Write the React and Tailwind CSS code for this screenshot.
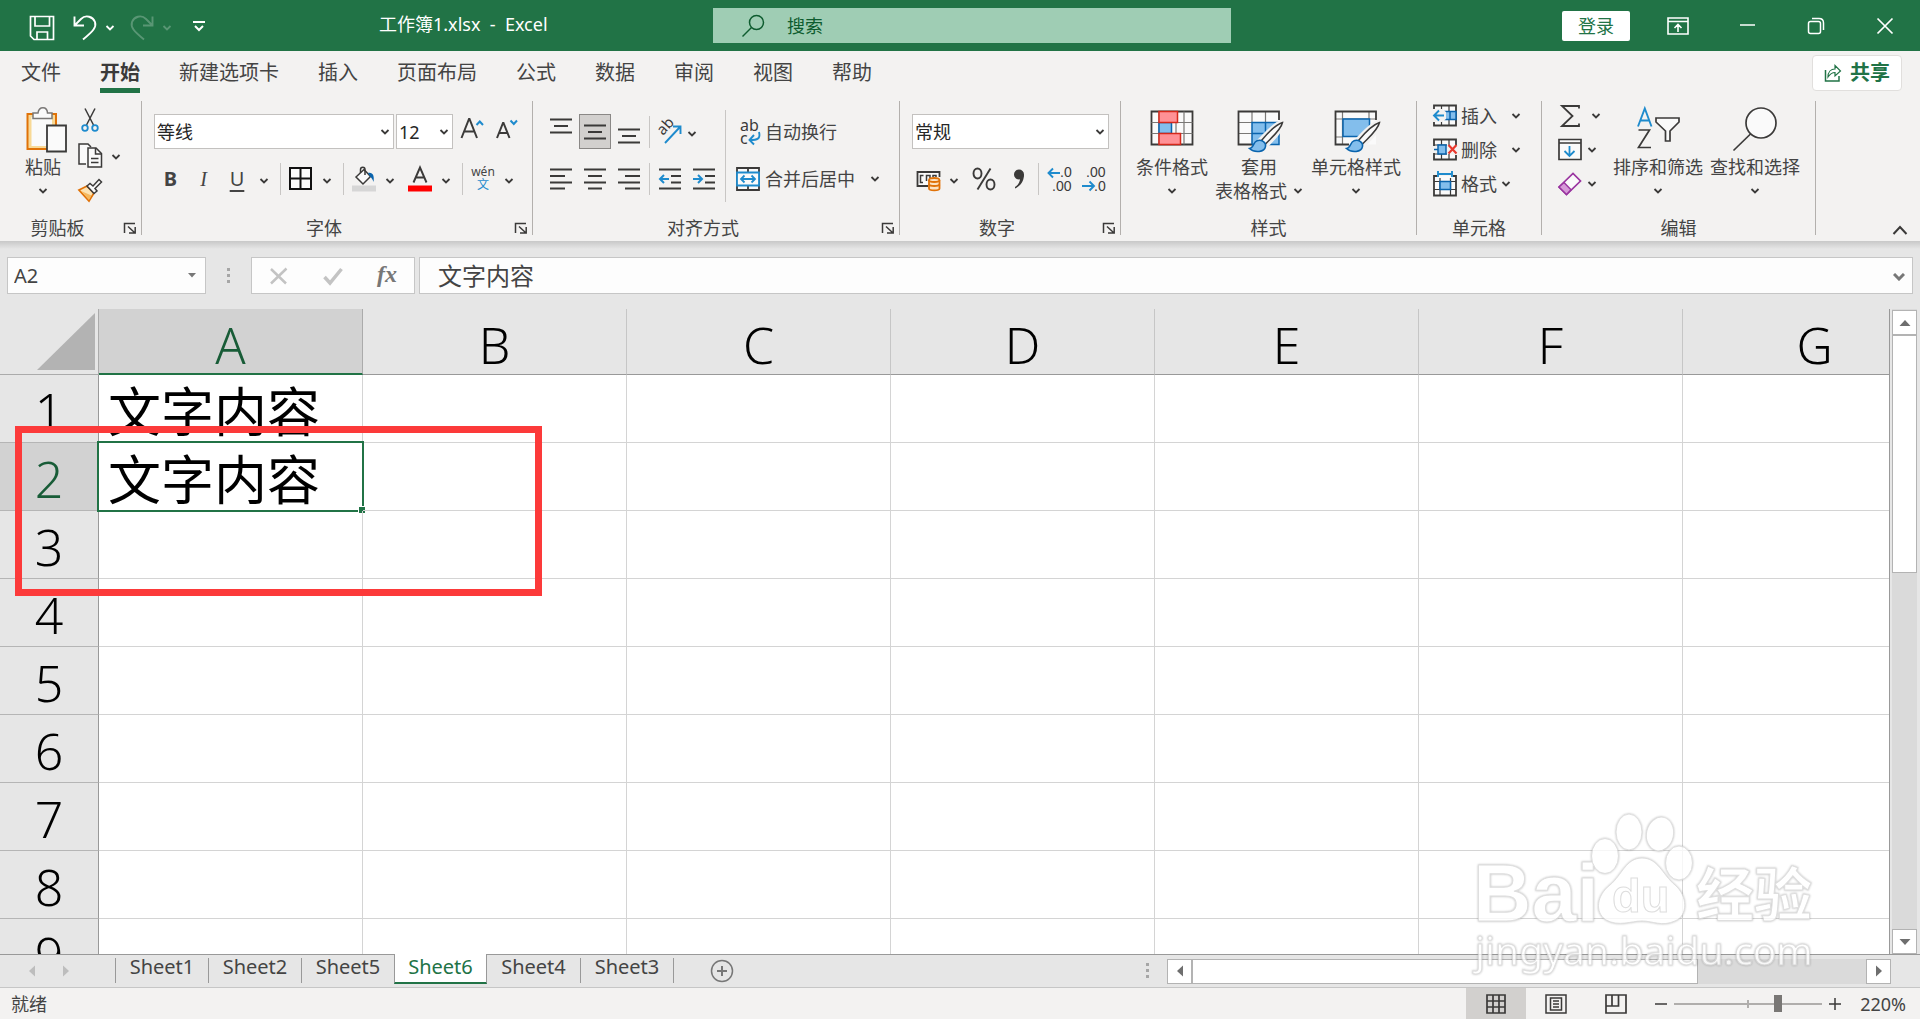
import React, { useState } from "react";
import clsx from "clsx";

const INK = "#3b3a39";
const BLUE = "#1e8bcd";

const tabs = ["文件", "开始", "新建选项卡", "插入", "页面布局", "公式", "数据", "审阅", "视图", "帮助"];
const columns = ["A", "B", "C", "D", "E", "F", "G"];
const rows = [1, 2, 3, 4, 5, 6, 7, 8, 9];
const sheets = ["Sheet1", "Sheet2", "Sheet5", "Sheet6", "Sheet4", "Sheet3"];
const cells = { A1: "文字内容", A2: "文字内容" };

const Icon = ({ w = 24, h = 24, children, className }) => (
  <svg
    width={w}
    height={h}
    viewBox={`0 0 ${w} ${h}`}
    fill="none"
    stroke={INK}
    strokeWidth="1.5"
    className={clsx("shrink-0 overflow-visible", className)}
    aria-hidden="true"
  >
    {children}
  </svg>
);

const Chevron = ({ color = INK, className }) => (
  <svg width="10" height="6" viewBox="0 0 10 6" fill="none" className={clsx("shrink-0", className)} aria-hidden="true">
    <path d="M1.5 1 L5 4.5 L8.5 1" stroke={color} strokeWidth="1.8" />
  </svg>
);

const Tool = ({ label, className, children }) => (
  <button type="button" aria-label={label} className={clsx("flex h-[35px] shrink-0 items-center justify-center", className)}>
    {children}
  </button>
);

const More = ({ label, className = "w-7" }) => (
  <Tool label={`${label}选项`} className={className}>
    <Chevron className="mt-1" />
  </Tool>
);

const Divider = ({ className }) => <span className={clsx("h-8 w-px shrink-0 bg-[#c8c6c4]", className)} />;

const Group = ({ label, launcher = true, className, children }) => (
  <section className={clsx("flex h-[134px] shrink-0 flex-col border-r border-[#b3b0ad]", className)}>
    <div className="flex h-[120px] items-start">{children}</div>
    <div className="flex h-[14px] items-center leading-[14px]">
      <span className="flex-1 text-center">{label}</span>
      {launcher && (
        <button type="button" aria-label={`${label}设置`} className="flex w-[26px] justify-end pr-1">
          <Icon w={14} h={12}>
            <path d="M1.5 11 V1.5 H12 M5 4.5 L11.5 10.5 M12.2 5 V11 H6" />
          </Icon>
        </button>
      )}
    </div>
  </section>
);

const BigButton = ({ icon, text, second, className }) => (
  <button type="button" className={clsx("flex shrink-0 flex-col items-center pt-1.5 leading-6 whitespace-nowrap", className)}>
    <span className="flex h-12 items-start">{icon}</span>
    <span>{text}</span>
    <span className="flex h-6 items-center gap-1.5">
      {second}
      <Chevron />
    </span>
  </button>
);

const Dropdown = ({ label, value, className }) => (
  <div className={clsx("relative h-[35px] shrink-0", className)}>
    <select
      aria-label={label}
      defaultValue={value}
      className="h-full w-full appearance-none border border-[#c3c1bf] bg-white pl-0.5 text-lg leading-6 text-[#262626] outline-none"
    >
      <option>{value}</option>
    </select>
    <Chevron className="pointer-events-none absolute top-[15px] right-1" />
  </div>
);

/* ---------- icons ---------- */

const PasteIcon = () => (
  <Icon w={48} h={48}>
    <path d="M8.5 7 H37 V42 H8.5 Z" fill="#f8d996" stroke="#e07208" strokeWidth="2" />
    <path d="M12.500 10 H33 V39 H12.500 Z" fill="#fafafa" stroke="none" />
    <path d="M14 11.5 V6 H19 C20 -1 28 -1 28.5 6 H33 V11.5 Z" fill="#fafafa" stroke="#7a7876" />
    <path d="M28 18.5 H47 V44.5 H28 Z" fill="#fafafa" strokeWidth="1.8" />
  </Icon>
);

const CutIcon = () => (
  <Icon w={26} h={26}>
    <path d="M8 1.5 L16.5 18 M18 1.5 L9.5 18" />
    <circle cx="8" cy="21" r="2.8" stroke={BLUE} strokeWidth="1.8" />
    <circle cx="18" cy="21" r="2.8" stroke={BLUE} strokeWidth="1.8" />
  </Icon>
);

const CopyIcon = () => (
  <Icon w={26} h={26}>
    <path d="M9 22 H2 V2 H11 L14 5" fill="#fafafa" />
    <path d="M11 6 H19 L24.5 11.5 V25 H11 Z" fill="#fafafa" />
    <path d="M18.5 6 V12 H24.5 M14 16.5 H21.5 M14 20.5 H21.5" />
  </Icon>
);

const BrushIcon = () => (
  <Icon w={26} h={26}>
    <path d="M2 13 L10 9 L17 16 L12 24 Z" fill="#fce3b4" stroke="#e07208" strokeWidth="1.8" />
    <path d="M4 14 L14.5 18.5 L12 23 Z" fill="#f6b95e" stroke="none" />
    <path d="M10 9 L13 6.5 L16 9 L22 2.5 L24.5 5 L18 11.5 L20 14 L17 16.5 Z" fill="#fafafa" />
  </Icon>
);

const GrowIcon = () => (
  <Icon>
    <path d="M1.5 21 L9 2 H9.5 L17 21 M4.5 14.5 H14" strokeWidth="2" />
    <path d="M16.5 8 L19.8 4.5 L23 8" stroke={BLUE} strokeWidth="2" />
  </Icon>
);

const ShrinkIcon = () => (
  <Icon>
    <path d="M1 21 L7 6 H7.5 L13.5 21 M3.5 16 H11" strokeWidth="2" />
    <path d="M14.5 3.500 L17.8 7 L21 3.500" stroke={BLUE} strokeWidth="2" />
  </Icon>
);

const BorderIcon = () => (
  <Icon>
    <path d="M1 1 H22 V22 H1 Z M11.5 1 V22 M1 11.5 H22" stroke="#111" strokeWidth="2" fill="#fafafa" />
  </Icon>
);

const FillIcon = () => (
  <Icon w={24} h={26}>
    <path d="M4 11 L12 3.5 L18.5 10.5 L11 18 Z" fill="#fafafa" />
    <path d="M8.5 7 V3.5 C8.5 0.5 13 0.5 13 3.5 V9" />
    <path d="M16 7 C21 6 22.5 10 21.5 16 C20.5 13 19.5 12 18 10.5 Z" fill="#0a64ad" stroke="none" />
    <path d="M0 19.5 H24 V25.5 H0 Z" fill="#d6d6d6" stroke="none" />
  </Icon>
);

const FontColorIcon = () => (
  <Icon w={24} h={26}>
    <path d="M5.5 16.5 L12 1.5 L18.5 16.5 M8 11.5 H16" strokeWidth="1.9" />
    <path d="M0 19.5 H24 V25.5 H0 Z" fill="#f00" stroke="none" />
  </Icon>
);

const LINES = {
  spread: "M1 5.5 H23 M5 12 H19 M1 18.5 H23",
  left: "M1 2.5 H23 M1 9 H16 M1 15.5 H23 M1 21.5 H16",
  center: "M1 2.5 H23 M5 9 H19 M1 15.5 H23 M5 21.5 H19",
  right: "M1 2.5 H23 M8 9 H23 M1 15.5 H23 M8 21.5 H23",
};

const LinesIcon = ({ kind }) => (
  <Icon>
    <path d={LINES[kind]} strokeWidth="1.8" />
  </Icon>
);

const OrientationIcon = () => (
  <Icon w={26} h={26}>
    <text transform="translate(6 17) rotate(-48)" fontSize="15" fill={INK} stroke="none">
      ab
    </text>
    <path d="M8 24 L23 8 M16 7.5 H23.5 V15" stroke={BLUE} strokeWidth="1.9" />
  </Icon>
);

const IndentIcon = ({ outdent }) => (
  <Icon>
    <path d="M1 2.5 H23 M13 9 H23 M13 15.5 H23 M1 21.5 H23" strokeWidth="1.8" />
    <path
      d={outdent ? "M11 12 H2 M6 8 L2 12 L6 16" : "M1 12 H10 M6 8 L10 12 L6 16"}
      stroke={BLUE}
      strokeWidth="2"
    />
  </Icon>
);

const WrapIcon = () => (
  <Icon w={24} h={28}>
    <text x="4" y="13" fontSize="16" fill={INK} stroke="none">ab</text>
    <text x="4" y="26" fontSize="16" fill={INK} stroke="none">c</text>
    <path d="M23 14 C25 21 21 22 14 22 M18 17 L13.5 22 L18 26.5" stroke={BLUE} strokeWidth="1.9" />
  </Icon>
);

const MergeIcon = () => (
  <Icon>
    <path d="M1 1 H23 V23 H1 Z M12 1 V23" fill="#fafafa" strokeWidth="1.8" />
    <path d="M1 5.5 H23 V18.5 H1 Z" fill="#fafafa" stroke={BLUE} strokeWidth="1.8" />
    <path d="M5 12 H19 M8.5 8.5 L5 12 L8.5 15.5 M15.5 8.5 L19 12 L15.5 15.5" stroke={BLUE} strokeWidth="1.8" />
  </Icon>
);

const CurrencyIcon = () => (
  <Icon>
    <path d="M12 19 H1.5 V5 H23.5 V10" fill="#fafafa" strokeWidth="1.8" />
    <path d="M7.5 8.5 H4.5 V15.5 H7 M10.5 14 V8.5 H14 V11 M17 10 V8.5 H20 V10" />
    <path d="M13 13 V21.5 C13 24 23.5 24 23.5 21.5 V13" fill="#fbe3c4" stroke="#e07208" strokeWidth="1.8" />
    <path d="M13 17.500 C14 19.500 22.500 19.500 23.500 17.500" stroke="#e07208" strokeWidth="1.8" />
    <ellipse cx="18.2" cy="13" rx="5.2" ry="2" fill="#fbe3c4" stroke="#e07208" strokeWidth="1.8" />
  </Icon>
);

const PercentIcon = () => (
  <Icon>
    <ellipse cx="5.500" cy="6.5" rx="4" ry="5" strokeWidth="1.9" />
    <ellipse cx="18.5" cy="17.5" rx="4" ry="5" strokeWidth="1.9" />
    <path d="M18.500 1.5 L5.500 22.5" strokeWidth="1.9" />
  </Icon>
);

const CommaIcon = () => (
  <Icon>
    <circle cx="12" cy="7.5" r="5" fill={INK} stroke="none" />
    <path d="M16.8 7 C17.5 14 13.5 19 8 21.5 V20 C11.5 18 13.5 14 13 10 Z" fill={INK} stroke="none" />
  </Icon>
);

const DecimalIcon = ({ more }) => (
  <Icon w={26} h={26} className="font-['Liberation_Sans',sans-serif]">
    <text x={more ? 13 : 5} y="11" fontSize="14" fill={INK} stroke="none">{more ? ".0" : ".00"}</text>
    <text x={more ? 5 : 13} y="25" fontSize="14" fill={INK} stroke="none">{more ? ".00" : ".0"}</text>
    <path
      d={more ? "M13 7 H1.5 M6 2.5 L1.5 7 L6 11.5" : "M1 20 H13 M8.5 15.5 L13 20 L8.5 24.5"}
      stroke={BLUE}
      strokeWidth="1.9"
    />
  </Icon>
);

const ConditionalIcon = () => (
  <Icon w={44} h={48}>
    <path d="M1.5 4.5 H42.5 V37.5 H1.5 Z" fill="#fafafa" strokeWidth="1.8" />
    <path d="M9 4.5 V37.5 M34 4.5 V37.5 M26 15 V27 M1.5 15.5 H42.5 M1.5 26.5 H42.5" stroke="#7a7876" strokeWidth="1.2" />
    <path d="M9 15.5 H21.5 V26.5 H9 Z" fill="#83beec" stroke="#0a64ad" />
    <path d="M9 4.5 H27.5 V15.5 H9 Z M9 26.5 H30.5 V37.5 H9 Z" fill="#ff9196" stroke="#d5281b" />
  </Icon>
);

const Paintbrush = () => (
  <>
    <path d="M45 15 C38 16 29 27 23 33 L29 39 C36 32 46 22 45 15 Z" fill="#fafafa" stroke="#f3f2f1" strokeWidth="4" />
    <path d="M45.5 15.5 C38 18 29 28 24.5 33.5 L28.5 37 C34 31 44 23 45.5 15.5 Z" fill="#fafafa" />
    <path d="M12.5 41.5 C17 41 16 35 20 33.8 C24 32 29.5 35.5 28.5 39.5 C27.5 45 18 46.5 12.5 41.5 Z" fill="#83beec" stroke="#0a64ad" />
  </>
);

const TableStyleIcon = () => (
  <Icon w={44} h={48}>
    <path d="M1.5 4.5 H42 V37.5 H1.5 Z" fill="#fafafa" stroke="none" />
    <path d="M15 15.5 H42 V37.5 H15 Z" fill="#83beec" stroke="none" />
    <path d="M1.5 15.5 H15 M1.5 26.5 H15 M15 4.5 V15.5 M28.5 4.5 V15.5" stroke="#7a7876" strokeWidth="1.2" />
    <path d="M42 13 V4.5 H1.5 V37.5 H15" strokeWidth="1.8" />
    <path d="M15 37.5 V15.5 H42 V37.5 H15 M15 26.5 H42 M28.5 15.5 V37.5" stroke="#0a64ad" />
    <Paintbrush />
  </Icon>
);

const CellStyleIcon = () => (
  <Icon w={44} h={48}>
    <path d="M1.5 4.5 H42 V37.5 H1.5 Z" fill="#fafafa" stroke="none" />
    <path d="M8.5 4.5 V37.5 M35 4.5 V12 M1.5 12 H42 M1.5 30 H9" stroke="#7a7876" strokeWidth="1.2" />
    <path d="M42 13 V4.5 H1.5 V37.5 H15" strokeWidth="1.8" />
    <path d="M9 12 H35.5 V29.5 H9 Z" fill="#83beec" stroke="#0a64ad" />
    <Paintbrush />
  </Icon>
);

const InsertIcon = () => (
  <Icon>
    <path d="M1 1.5 H23 V21.5 H1 Z" fill="#fafafa" strokeWidth="1.8" />
    <path d="M8.5 1.5 V21.5 M16 1.5 V21.5 M1 7.5 H23 M1 15.5 H23" strokeWidth="1.2" />
    <path d="M12 7.5 H23 V15.5 H12 Z M17 7.5 V15.5" fill="#83beec" stroke="#0a64ad" />
    <path d="M0 5 H9 L13 8 V15 L9 18 H0 Z" fill="#f3f2f1" stroke="none" />
    <path d="M11 11.5 H1 M6 6.5 L1 11.5 L6 16.5" stroke={BLUE} strokeWidth="1.9" />
  </Icon>
);

const DeleteIcon = () => (
  <Icon>
    <path d="M1 8 V1.5 H23 V7 M1 15 V21.5 H23 V17" fill="#fafafa" strokeWidth="1.8" />
    <path d="M8.5 1.5 V7 M16 1.5 V7 M8.5 16 V21.5 M16 16 V21.5 M1 7 H14 M1 16 H14" strokeWidth="1.2" />
    <path d="M5 7 H13 V16 H5 Z" fill="#83beec" stroke="#0a64ad" />
    <path d="M1 11.5 H5" stroke="#0a64ad" />
    <path d="M15.5 7 L23.5 15.5 M23.5 7 L15.5 15.5" stroke="#e8382d" strokeWidth="2.2" />
  </Icon>
);

const FormatIcon = () => (
  <Icon w={24} h={26}>
    <path d="M4 5 H1 V24.5 H23 V5 H20" fill="#fafafa" strokeWidth="1.8" />
    <path d="M7 7 V24.5 M17.5 7 V24.5 M1 10.5 H23 M1 18.5 H23" strokeWidth="1.2" />
    <path d="M7 10.5 H17.5 V18.5 H7 Z" fill="#83beec" stroke="#0a64ad" />
    <path d="M5 3 H19 M5 0 V6 M19 0 V6" stroke={BLUE} strokeWidth="1.9" />
  </Icon>
);

const SumIcon = () => (
  <Icon>
    <path d="M21 4.5 V2 H4 L14.5 12 L4 22 H21 V19.5" strokeWidth="1.8" />
  </Icon>
);

const FillDownIcon = () => (
  <Icon>
    <path d="M1 1.5 H23 V21.5 H1 Z M1 5 H23" fill="#fafafa" strokeWidth="1.7" />
    <path d="M11.5 8 V18 M6.5 13 L11.5 18 L16.5 13" stroke={BLUE} strokeWidth="1.8" />
  </Icon>
);

const EraserIcon = () => (
  <Icon>
    <path d="M1 15 L15 1.5 L22.5 9 L8.5 22.5 Z" fill="#fafafa" stroke="#9a35a0" strokeWidth="1.7" />
    <path d="M1 15 L6 10.5 L13 17.8 L8.5 22.5 Z" fill="#d69ad8" stroke="#9a35a0" />
  </Icon>
);

const SortIcon = () => (
  <Icon w={42} h={48}>
    <path d="M1 19.5 L7.8 1.5 L14.5 19.5 M3.5 13.5 H12.5" stroke={BLUE} strokeWidth="1.9" />
    <path d="M1.5 23 H12.5 L1.5 40.5 H14" strokeWidth="1.7" />
    <path d="M19 11 H42 V15 L33 24 V34 H28.5 V24 L19 15 Z" fill="#fafafa" strokeWidth="1.7" />
  </Icon>
);

const FindIcon = () => (
  <Icon w={46} h={48}>
    <circle cx="29" cy="16" r="15" fill="#fafafa" strokeWidth="1.7" />
    <path d="M18.5 27 L1.5 43.5" strokeWidth="1.7" />
  </Icon>
);

const Dots = () => (
  <svg width="4" height="16" fill="#a6a6a6" aria-hidden="true">
    <path d="M0 0 H3 V3 H0 Z M0 6 H3 V9 H0 Z M0 12 H3 V15 H0 Z" />
  </svg>
);

const Triangle = ({ d, color = "#6e6e6e" }) => (
  <svg width="12" height="12" viewBox="0 0 12 12" fill={color} aria-hidden="true">
    <path d={d} />
  </svg>
);

const UP = "M0.5 9 L6 3 L11.5 9 Z";
const DOWN = "M0.5 3 L6 9 L11.5 3 Z";
const LEFT = "M9 0.5 L3 6 L9 11.5 Z";
const RIGHT = "M3 0.5 L9 6 L3 11.5 Z";

/* ---------- page parts ---------- */

const TitleBar = () => (
  <header className="flex h-[51px] shrink-0 items-center bg-[#217346] text-lg text-white">
    <div className="flex flex-1 items-center pl-[29px]">
      <button type="button" aria-label="保存" className="mt-1">
        <Icon w={26} h={26}>
          <path d="M1.5 1.5 H24.5 V24.5 H5 L1.5 21 Z M6 1.5 V11 H20.5 V1.5 M8 24.5 V17 H18.5 V24.5" stroke="#fff" strokeWidth="1.7" />
        </Icon>
      </button>
      <button type="button" aria-label="撤消" className="mt-1 ml-[18px] flex items-center gap-2">
        <Icon w={24} h={26}>
          <path d="M1.5 1.5 V10.5 H11 M1.5 10.5 L8 4 C13 -1 20 2 22 7 C23.5 12 21 15.5 10 24.5" stroke="#fff" strokeWidth="1.9" />
        </Icon>
        <Chevron color="#fff" />
      </button>
      <button type="button" aria-label="恢复" className="mt-1 ml-[15px] flex items-center gap-2 opacity-25">
        <Icon w={24} h={26}>
          <path d="M22.5 1.5 V10.5 H13 M22.5 10.5 L16 4 C11 -1 4 2 2 7 C0.5 12 3 15.5 14 24.5" stroke="#fff" strokeWidth="1.9" />
        </Icon>
        <Chevron color="#fff" />
      </button>
      <button type="button" aria-label="自定义快速访问工具栏" className="ml-5">
        <Icon w={14} h={12}>
          <path d="M1 2 H13 M3 6 L7 10 L11 6" stroke="#fff" strokeWidth="2" />
        </Icon>
      </button>
      <h1 className="ml-[173px] pb-1 leading-6 whitespace-pre">工作簿1.xlsx  -  Excel</h1>
    </div>
    <label className="flex h-[35px] w-[518px] items-center bg-[#9fcdb4] pl-7 text-[#0e5c2f]">
      <Icon w={24} h={24}>
        <circle cx="15.5" cy="8.5" r="7" stroke="#0e5c2f" />
        <path d="M10.5 13.5 L1.5 22.5" stroke="#0e5c2f" />
      </Icon>
      <input
        type="search"
        aria-label="搜索"
        placeholder="搜索"
        className="ml-[22px] w-full bg-transparent leading-6 outline-none placeholder:text-[#0e5c2f]"
      />
    </label>
    <div className="flex w-[689px] items-center justify-end pr-[26px]">
      <button type="button" className="h-[30px] w-[68px] rounded-xs bg-white leading-6 text-[#217346]">登录</button>
      <button type="button" aria-label="功能区显示选项" className="ml-[37px]">
        <Icon w={22} h={18}>
          <path d="M1 1 H21 V17 H1 Z M1 4.5 H21 M11 15 V7.5 M7.5 11 L11 7.5 L14.5 11" stroke="#fff" strokeWidth="1.6" />
        </Icon>
      </button>
      <button type="button" aria-label="最小化" className="ml-[50px]">
        <Icon w={18} h={18}><path d="M1 8 H16" stroke="#fff" /></Icon>
      </button>
      <button type="button" aria-label="还原" className="ml-[50px]">
        <Icon w={18} h={18}>
          <rect x="1.5" y="4.5" width="12" height="12" rx="2" stroke="#fff" />
          <path d="M5 1.5 H12 C15.5 1.5 16.5 3 16.5 6 V13" stroke="#fff" />
        </Icon>
      </button>
      <button type="button" aria-label="关闭" className="ml-[51px]">
        <Icon w={18} h={18}><path d="M1.5 1.5 L16.5 16.5 M16.5 1.5 L1.5 16.5" stroke="#fff" strokeWidth="1.7" /></Icon>
      </button>
    </div>
  </header>
);

const TabRow = () => (
  <nav className="flex h-11 shrink-0 items-start justify-between pr-[18px] pl-[21px] text-xl">
    <div className="flex gap-[39px]">
      {tabs.map((tab) => (
        <button
          key={tab}
          type="button"
          className={clsx(
            "h-[42px] border-b-[5px] pt-1.5 leading-[31px] whitespace-nowrap",
            tab === "开始" ? "border-[#217346] font-bold text-[#3b3a39]" : "border-transparent"
          )}
        >
          {tab}
        </button>
      ))}
    </div>
    <button
      type="button"
      className="mt-1 flex h-9 w-[90px] items-center justify-center gap-2 rounded-sm border border-[#e1dfdd] bg-white font-bold text-[#217346]"
    >
      <Icon w={18} h={18}>
        <path d="M1.5 6 V17 H15 V12" stroke="#217346" />
        <path d="M4 13 C4 8 7 5 11 5 V1.5 L16.5 7 L11 12 V8.5 C8 8.5 6 10 4 13 Z" stroke="#217346" strokeWidth="1.2" />
      </Icon>
      共享
    </button>
  </nav>
);

const ClipboardGroup = () => (
  <Group label="剪贴板" className="w-[142px]">
    <BigButton className="ml-[19px] w-12" icon={<PasteIcon />} text="粘贴" />
    <div className="ml-2.5 flex flex-col items-start pt-px">
      <Tool label="剪切"><CutIcon /></Tool>
      <div className="flex">
        <Tool label="复制"><CopyIcon /></Tool>
        <More label="复制" className="w-[26px]" />
      </div>
      <Tool label="格式刷"><BrushIcon /></Tool>
    </div>
  </Group>
);

const FontGroup = () => (
  <Group label="字体" className="w-[391px]">
    <div className="flex flex-col gap-3 pt-[13px] pl-3">
      <div className="flex">
        <Dropdown label="字体名称" value="等线" className="w-[240px]" />
        <Dropdown label="字号" value="12" className="ml-0.5 w-[57px]" />
        <Tool label="增大字号" className="ml-[7px] w-6 pb-1.5"><GrowIcon /></Tool>
        <Tool label="减小字号" className="ml-3 w-6 pb-1.5"><ShrinkIcon /></Tool>
      </div>
      <div className="flex items-center">
        <Tool label="加粗" className="w-[33px] text-xl font-bold"><span className="leading-6">B</span></Tool>
        <Tool label="倾斜" className="w-[33px] font-['Liberation_Serif',serif] text-xl italic"><span>I</span></Tool>
        <Tool label="下划线" className="w-[34px] text-xl underline underline-offset-4"><span className="leading-6">U</span></Tool>
        <More label="下划线" className="w-5" />
        <Divider className="ml-1.5" />
        <Tool label="边框" className="ml-2"><BorderIcon /></Tool>
        <More label="边框" />
        <Divider className="ml-0.5" />
        <Tool label="填充颜色" className="ml-2"><FillIcon /></Tool>
        <More label="填充颜色" />
        <Tool label="字体颜色" className="ml-1"><FontColorIcon /></Tool>
        <More label="字体颜色" />
        <Divider className="ml-0.5" />
        <Tool label="拼音指南" className="ml-2 w-6 flex-col text-xs">
          <span className="leading-3">wén</span>
          <span className="leading-[14px] text-[#1e8bcd]">文</span>
        </Tool>
        <More label="拼音指南" />
      </div>
    </div>
  </Group>
);

const AlignGroup = () => (
  <Group label="对齐方式" className="w-[367px]">
    <div className="flex flex-col gap-3 pt-[13px] pl-[11px]">
      <div className="flex items-center">
        <Tool label="顶端对齐" className="w-[34px] pb-[11px]"><LinesIcon kind="spread" /></Tool>
        <Tool label="垂直居中" className="mx-px w-8 border border-[#8a8886] bg-[#d2d0ce]"><LinesIcon kind="spread" /></Tool>
        <Tool label="底端对齐" className="w-[34px] pt-[9px]"><LinesIcon kind="spread" /></Tool>
        <Divider className="ml-[3px]" />
        <Tool label="方向" className="ml-2 w-6"><OrientationIcon /></Tool>
        <More label="方向" className="w-5" />
      </div>
      <div className="flex items-center">
        <Tool label="左对齐" className="w-[34px]"><LinesIcon kind="left" /></Tool>
        <Tool label="居中" className="w-[34px]"><LinesIcon kind="center" /></Tool>
        <Tool label="右对齐" className="w-[34px]"><LinesIcon kind="right" /></Tool>
        <Divider className="ml-[3px]" />
        <Tool label="减少缩进量" className="ml-2"><IndentIcon outdent /></Tool>
        <Tool label="增加缩进量" className="ml-2.5"><IndentIcon /></Tool>
      </div>
    </div>
    <span className="mt-[9px] ml-[9px] h-[92px] w-px bg-[#c8c6c4]" />
    <div className="flex flex-col gap-3 pt-[13px] pl-2.5">
      <button type="button" className="flex h-[35px] items-center gap-[5px]">
        <WrapIcon />
        自动换行
      </button>
      <button type="button" className="flex h-[35px] items-center gap-[5px]">
        <MergeIcon />
        合并后居中
        <Chevron className="ml-2.5" />
      </button>
    </div>
  </Group>
);

const NumberGroup = () => (
  <Group label="数字" className="w-[221px]">
    <div className="flex flex-col gap-3 pt-[13px] pl-3">
      <Dropdown label="数字格式" value="常规" className="w-[197px]" />
      <div className="flex items-center pl-1">
        <Tool label="会计数字格式"><CurrencyIcon /></Tool>
        <More label="会计数字格式" />
        <Tool label="百分比样式" className="ml-1"><PercentIcon /></Tool>
        <Tool label="千位分隔样式" className="ml-[11px]"><CommaIcon /></Tool>
        <Divider className="ml-[7px]" />
        <Tool label="增加小数位数" className="ml-2"><DecimalIcon more /></Tool>
        <Tool label="减少小数位数" className="ml-2"><DecimalIcon /></Tool>
      </div>
    </div>
  </Group>
);

const StylesGroup = () => (
  <Group label="样式" launcher={false} className="w-[296px]">
    <BigButton className="ml-[13px] w-[76px]" icon={<ConditionalIcon />} text="条件格式" />
    <BigButton className="ml-[3px] w-[92px]" icon={<TableStyleIcon />} text="套用" second="表格格式" />
    <BigButton className="ml-[5px] w-[92px]" icon={<CellStyleIcon />} text="单元格样式" />
  </Group>
);

const CellsGroup = () => (
  <Group label="单元格" launcher={false} className="w-[125px]">
    <div className="flex flex-col gap-2.5 pt-[3px] pl-4">
      <button type="button" className="flex h-6 items-center gap-1"><InsertIcon />插入<Chevron className="ml-2.5" /></button>
      <button type="button" className="flex h-6 items-center gap-1"><DeleteIcon />删除<Chevron className="ml-2.5" /></button>
      <button type="button" className="flex h-6 items-center gap-1"><FormatIcon />格式<Chevron /></button>
    </div>
  </Group>
);

const EditGroup = () => (
  <Group label="编辑" launcher={false} className="w-[274px]">
    <div className="flex w-[60px] flex-col gap-2.5 pt-[3px] pl-4">
      <button type="button" aria-label="自动求和" className="flex h-6 items-center gap-[9px]"><SumIcon /><Chevron /></button>
      <button type="button" aria-label="填充" className="flex h-6 items-center gap-[5px]"><FillDownIcon /><Chevron /></button>
      <button type="button" aria-label="清除" className="flex h-6 items-center gap-[5px]"><EraserIcon /><Chevron /></button>
    </div>
    <BigButton className="ml-2.5 w-[92px]" icon={<SortIcon />} text="排序和筛选" />
    <BigButton className="ml-[5px] w-[92px]" icon={<FindIcon />} text="查找和选择" />
  </Group>
);

const Ribbon = () => (
  <div className="flex shrink-0 items-start py-1.5 text-lg">
    <ClipboardGroup />
    <FontGroup />
    <AlignGroup />
    <NumberGroup />
    <StylesGroup />
    <CellsGroup />
    <EditGroup />
    <button type="button" aria-label="折叠功能区" className="mr-3 ml-auto self-end">
      <Icon w={16} h={10}><path d="M1.5 9 L8 2 L14.5 9" strokeWidth="2" /></Icon>
    </button>
  </div>
);

const FormulaBar = ({ value, onChange }) => (
  <div className="shrink-0 bg-[#e6e6e6]">
    <div className="h-2 bg-linear-to-b from-[#c8c8c8] to-[#e6e6e6]" />
    <div className="flex h-[60px] px-[7px] pt-2">
      <div className="relative h-[37px] w-[199px]">
        <input
          aria-label="名称框"
          defaultValue="A2"
          className="h-full w-full border border-[#c6c6c6] bg-[#fdfdfd] pl-1.5 text-xl leading-6 outline-none"
        />
        <svg width="8" height="5" className="pointer-events-none absolute top-4 right-2.5" fill="#777" aria-hidden="true">
          <path d="M0 0 H8 L4 4.5 Z" />
        </svg>
      </div>
      <div className="flex h-[37px] w-[45px] items-center justify-center"><Dots /></div>
      <div className="flex h-[37px] w-[164px] items-center justify-between border border-[#c6c6c6] bg-[#fdfdfd] px-[17px]">
        <button type="button" aria-label="取消">
          <Icon w={20} h={20}><path d="M2 3 L17 17.5 M17.5 2.5 L2 17.5" stroke="#c3c3c3" strokeWidth="2.5" /></Icon>
        </button>
        <button type="button" aria-label="输入">
          <Icon w={20} h={20}><path d="M1.5 11 L7 17 L18.5 3" stroke="#c3c3c3" strokeWidth="3.5" /></Icon>
        </button>
        <button type="button" aria-label="插入函数" className="pb-1 font-['Liberation_Serif',serif] text-2xl leading-7 font-bold text-[#777] italic">
          fx
        </button>
      </div>
      <div className="relative ml-1 h-[37px] flex-1">
        <input
          aria-label="编辑栏"
          value={value}
          onChange={onChange}
          className="h-full w-full border border-[#c6c6c6] bg-[#fdfdfd] px-[18px] pb-0.5 text-2xl leading-8 outline-none"
        />
        <svg width="12" height="8" className="pointer-events-none absolute top-4 right-2" fill="none" aria-hidden="true">
          <path d="M1 1 L6 6 L11 1" stroke="#777" strokeWidth="3" />
        </svg>
      </div>
    </div>
  </div>
);

const Grid = ({ values }) => (
  <div className="relative flex min-h-0 flex-1 overflow-hidden bg-[#e6e6e6]">
    <div className="min-w-0 flex-1 overflow-hidden border-r border-[#999]">
      <table className="w-[1947px] table-fixed border-separate border-spacing-0 bg-white text-black">
        <thead>
          <tr className="h-[66px] bg-[#e6e6e6] text-[50px] leading-[56px]">
            <th className="w-[99px] border-r border-b border-[#ababab] p-0">
              <button type="button" aria-label="全选" className="block pl-[37px]">
                <svg width="58" height="57" fill="#b3b3b3" aria-hidden="true"><path d="M58 0 V57 H0 Z" /></svg>
              </button>
            </th>
            {columns.map((col) => (
              <th
                key={col}
                scope="col"
                className={clsx(
                  "w-[264px] border-r p-0 pt-[7px] text-center font-[350]",
                  col === "A"
                    ? "border-b-2 border-r-[#ababab] border-b-[#217346] bg-[#d2d2d2] text-[#185c37]"
                    : "border-b border-r-[#c6c6c6] border-b-[#999]"
                )}
              >
                {col}
              </th>
            ))}
          </tr>
        </thead>
        <tbody>
          {rows.map((row) => (
            <tr key={row} className="h-[68px] leading-[60px]">
              <th
                scope="row"
                className={clsx(
                  "border-r border-b border-r-[#999] border-b-[#b5b5b5] p-0 pt-[5px] text-center text-[50px] font-[350]",
                  row === 2 ? "bg-[#d2d2d2] text-[#185c37]" : "bg-[#e6e6e6]"
                )}
              >
                {row}
              </th>
              {columns.map((col) => {
                const id = col + row;
                return (
                  <td key={id} className="relative border-r border-b border-[#d4d4d4] p-0 pt-[7px] pl-[9px] text-[53px] whitespace-nowrap">
                    {values[id]}
                    {id === "A2" && (
                      <span className="absolute -top-0.5 -right-0.5 -bottom-0.5 -left-0.5 border-2 border-[#217346]">
                        <span className="absolute -right-[3px] -bottom-[3px] h-[7px] w-[7px] border-t border-l border-white bg-[#217346]" />
                      </span>
                    )}
                  </td>
                );
              })}
            </tr>
          ))}
        </tbody>
      </table>
    </div>
    <div className="mr-[3px] ml-0.5 flex w-[25px] shrink-0 flex-col bg-[#dadada] pt-px">
      <button type="button" aria-label="向上滚动" className="flex h-[25px] items-center justify-center border border-[#b3b3b3] bg-white">
        <Triangle d={UP} />
      </button>
      <div className="flex-1">
        <div className="h-[40%] border border-[#b3b3b3] bg-white" />
      </div>
      <button type="button" aria-label="向下滚动" className="flex h-[25px] items-center justify-center border border-[#b3b3b3] bg-white">
        <Triangle d={DOWN} />
      </button>
    </div>
    <div className="pointer-events-none absolute top-[117px] left-[15px] h-[170px] w-[527px] border-[7px] border-[#fc3a3a]" />
  </div>
);

const SheetBar = () => (
  <div className="flex h-[33px] shrink-0 items-start border-t border-[#999] bg-[#e6e6e6] text-xl leading-[18px]">
    <div className="flex h-8 w-[115px] items-center gap-[22px] pl-[26px]">
      <button type="button" aria-label="上一个工作表"><Triangle d={LEFT} color="#bdbdbd" /></button>
      <button type="button" aria-label="下一个工作表"><Triangle d={RIGHT} color="#bdbdbd" /></button>
    </div>
    {sheets.map((name) => (
      <button
        key={name}
        type="button"
        className={clsx(
          "flex w-[93px] shrink-0 items-start justify-center",
          name === "Sheet6"
            ? "relative -mt-px h-[30px] border-x border-b-2 border-x-[#999] border-b-[#217346] bg-white pt-1 text-[#217346]"
            : "mt-[3px] h-[25px]",
          name !== "Sheet6" && name !== "Sheet4" && "border-l border-[#999]"
        )}
      >
        {name}
      </button>
    ))}
    <span className="mt-[3px] h-[25px] w-px bg-[#999]" />
    <button type="button" aria-label="新工作表" className="mt-1 ml-9">
      <Icon>
        <circle cx="12" cy="12" r="10.5" stroke="#777" />
        <path d="M12 7 V17 M7 12 H17" stroke="#777" strokeWidth="2" />
      </Icon>
    </button>
    <div className="ml-auto flex h-8 items-center gap-[17px] pr-[29px]">
      <Dots />
      <div className="flex h-[25px] w-[724px] bg-[#dadada]">
        <button type="button" aria-label="向左滚动" className="flex w-[25px] items-center justify-center border border-[#b3b3b3] bg-white">
          <Triangle d={LEFT} />
        </button>
        <div className="flex-1">
          <div className="h-full w-3/4 border border-[#b3b3b3] bg-white" />
        </div>
        <button type="button" aria-label="向右滚动" className="flex w-[25px] items-center justify-center border border-[#b3b3b3] bg-white">
          <Triangle d={RIGHT} />
        </button>
      </div>
    </div>
  </div>
);

const StatusBar = () => {
  const [zoom, setZoom] = useState(71);

  return (
    <footer className="flex h-8 shrink-0 items-center border-t border-[#c6c6c6] pr-[14px] pl-[11px] text-lg leading-6">
      <span>就绪</span>
      <div className="ml-auto flex h-full">
        <button type="button" aria-label="普通" className="flex w-[60px] items-center justify-center bg-[#d2d0ce]">
          <Icon w={20} h={20}><path d="M1 1 H19 V19 H1 Z M7 1 V19 M13 1 V19 M1 7 H19 M1 13 H19" strokeWidth="1.7" /></Icon>
        </button>
        <button type="button" aria-label="页面布局" className="flex w-[60px] items-center justify-center">
          <Icon w={22} h={20}><path d="M1 1 H21 V19 H1 Z M5.5 4 H16.5 V16 H5.5 Z M8 7 H14 M8 10 H14 M8 13 H14" /></Icon>
        </button>
        <button type="button" aria-label="分页预览" className="flex w-[60px] items-center justify-center">
          <Icon w={22} h={20}><path d="M1 1 H21 V19 H1 Z M1 12 H13.5 V1 M7 1 V12" strokeWidth="1.7" /></Icon>
        </button>
      </div>
      <button type="button" aria-label="缩小" className="ml-2">
        <Icon w={14} h={14}><path d="M1 7 H13" /></Icon>
      </button>
      <div className="relative mx-1.5 flex h-5 w-[148px] items-center">
        <span className="absolute top-1.5 left-[73px] h-2 w-0.5 bg-[#b0aeac]" />
        <input
          type="range"
          aria-label="显示比例"
          value={zoom}
          onChange={(e) => setZoom(e.target.value)}
          className="relative h-0.5 w-full appearance-none bg-[#b0aeac] [&::-webkit-slider-thumb]:h-[17px] [&::-webkit-slider-thumb]:w-2 [&::-webkit-slider-thumb]:appearance-none [&::-webkit-slider-thumb]:bg-[#797775]"
        />
      </div>
      <button type="button" aria-label="放大">
        <Icon w={14} h={14}><path d="M1 7 H13 M7 1 V13" /></Icon>
      </button>
      <span className="ml-[18px]">220%</span>
    </footer>
  );
};

const Watermark = () => (
  <svg
    width="350"
    height="170"
    viewBox="0 0 350 170"
    className="pointer-events-none absolute right-[98px] bottom-[37px] opacity-80 drop-shadow-[0_0_1px_rgba(0,0,0,0.3)]"
    fill="#fff"
    stroke="#d6d6d6"
    strokeWidth="1"
    aria-hidden="true"
  >
    <text x="1" y="109" fontSize="81" fontWeight="700" className="font-['Liberation_Sans',sans-serif]">Bai</text>
    <ellipse cx="133" cy="44" rx="13.5" ry="17.5" />
    <ellipse cx="157" cy="20" rx="13" ry="18" />
    <ellipse cx="188" cy="22" rx="13.5" ry="17" transform="rotate(12 188 22)" />
    <ellipse cx="207" cy="51" rx="13.5" ry="17" />
    <path d="M170 46 C186 46 190 62 203 73 C216 84 216 104 203 109 C190 115 181 109 170 109 C159 109 147 115 134 108 C122 100 125 83 138 73 C150 63 154 46 170 46 Z" />
    <text x="140" y="100" fontSize="47" fontWeight="700" className="font-['Liberation_Sans',sans-serif]">du</text>
    <text x="224" y="104" fontSize="58" fontWeight="700" className="font-['Noto_Sans_CJK_SC',sans-serif]">经验</text>
    <text x="3" y="153" fontSize="39" className="font-['Noto_Sans',sans-serif]">jingyan.baidu.com</text>
  </svg>
);

const App = () => {
  const [values, setValues] = useState(cells);

  const handleChange = (e) => setValues({ ...values, A2: e.target.value });

  return (
    <div className="relative flex h-screen flex-col overflow-hidden bg-[#f3f2f1] font-['Noto_Sans','Noto_Sans_CJK_SC',sans-serif] text-[#444]">
      <TitleBar />
      <TabRow />
      <Ribbon />
      <FormulaBar value={values.A2} onChange={handleChange} />
      <Grid values={values} />
      <SheetBar />
      <StatusBar />
      <Watermark />
    </div>
  );
};

export default App;
